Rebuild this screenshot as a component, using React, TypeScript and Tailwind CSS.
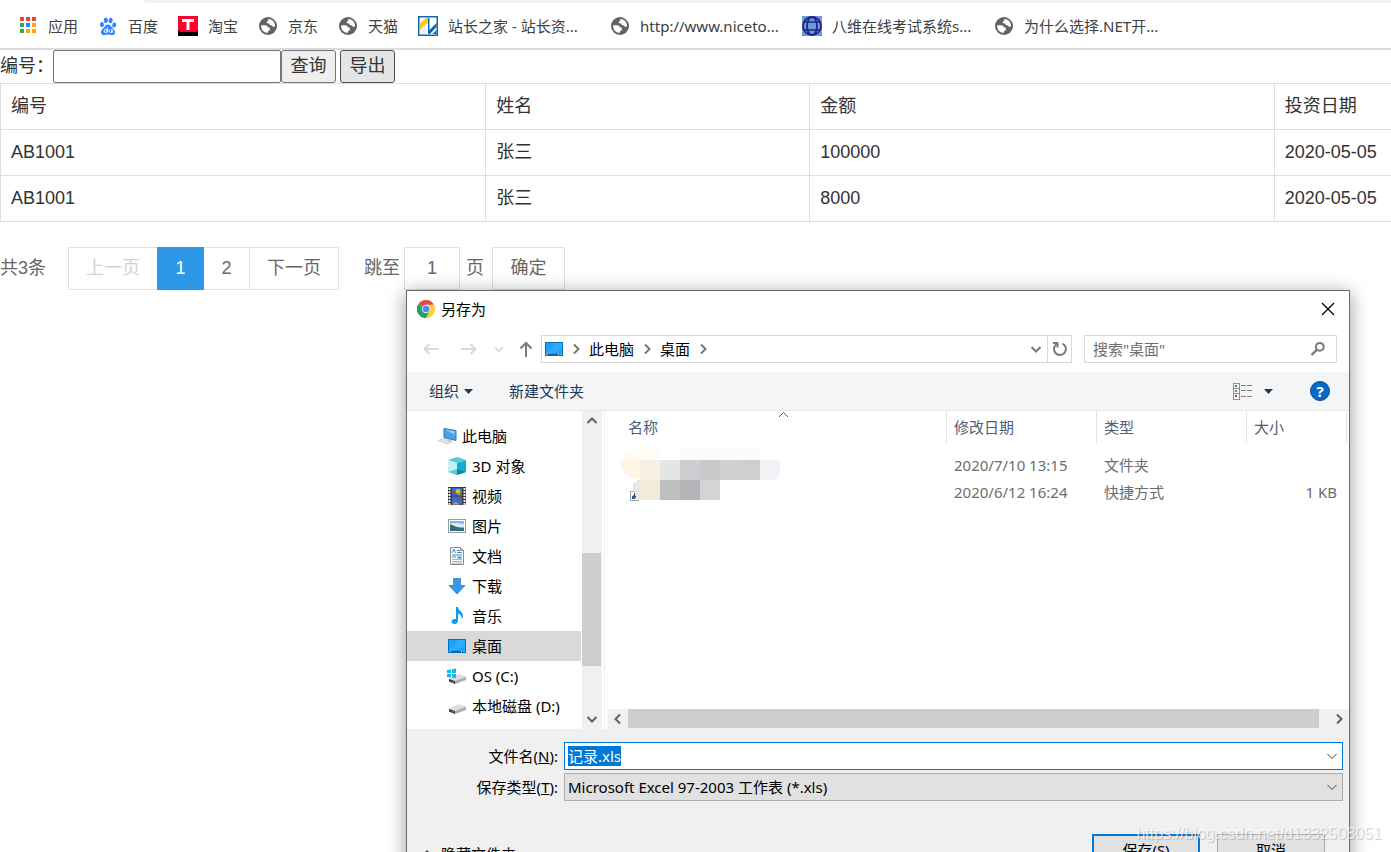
import React, { useEffect, useRef, useState } from 'react';

const UI_FONT = "font-['Noto_Sans','Noto_Sans_CJK_SC',sans-serif]";
const PAGE_FONT = "font-['Liberation_Sans','Noto_Sans_CJK_SC',sans-serif]";

/* ---------- bookmark icons ---------- */

const AppsIcon = () => (
  <svg width="20" height="20" viewBox="0 0 20 20" shapeRendering="crispEdges">
    <rect x="2" y="1" width="4" height="4" fill="#ea4335" />
    <rect x="8" y="1" width="4" height="4" fill="#ea4335" />
    <rect x="14" y="1" width="4" height="4" fill="#ea4335" />
    <rect x="2" y="7" width="4" height="4" fill="#34a853" />
    <rect x="8" y="7" width="4" height="4" fill="#1a8cff" />
    <rect x="14" y="7" width="4" height="4" fill="#fba90a" />
    <rect x="2" y="13" width="4" height="4" fill="#34a853" />
    <rect x="8" y="13" width="4" height="4" fill="#fba90a" />
    <rect x="14" y="13" width="4" height="4" fill="#fba90a" />
  </svg>
);

const PawIcon = () => (
  <svg width="20" height="20" viewBox="0 0 20 20" fill="#3385ff">
    <ellipse cx="4" cy="8.6" rx="2" ry="2.6" transform="rotate(-10 4 8.6)" />
    <ellipse cx="7.8" cy="4.3" rx="2" ry="2.8" />
    <ellipse cx="12.6" cy="4.5" rx="2" ry="2.8" transform="rotate(14 12.6 4.5)" />
    <ellipse cx="16.2" cy="9" rx="2" ry="2.6" transform="rotate(10 16.2 9)" />
    <path d="M10 8.6c2 0 2.8 1.7 4 3 1.400 1.400 3 2.500 3 4.600 0 2.200-1.700 3-3.500 2.800-1.300-.2-2.200-.4-3.500-.4s-2.200.3-3.500.5c-1.900.2-3.500-.8-3.500-2.900 0-2 1.600-3.200 3-4.600 1.200-1.300 2-3 4-3z" />
    <g fill="none" stroke="#fff" strokeWidth="1">
      <circle cx="7.600" cy="15" r="1.500" />
      <path d="M9.300 11.500v5M11.300 13.300v2c0 1.500 2.700 1.500 2.700 0v-2V17" />
    </g>
  </svg>
);

const TaobaoIcon = () => (
  <svg width="20" height="20" viewBox="0 0 20 20">
    <rect width="20" height="20" fill="#000" />
    <path d="M0 0h20v15l-2 1H2l-2-2z" fill="#ff0030" />
    <path d="M4 3h12v3h-4.500v8h-3V6H4z" fill="#fff" />
  </svg>
);

const GlobeIcon = () => (
  <svg width="20" height="20" viewBox="0 0 20 20">
    <circle cx="10" cy="10" r="9" fill="#5f6368" />
    <path d="M3.200 9.200h4.300c1.500 0 2.200.8 2.200 2.200 1.600-.2 2.300.6 2.200 1.900-.1 1.500-1.200 1.700-1.900 1.900v1.600C6 17 2.700 13.600 3.200 9.200z" fill="#fff" />
    <path d="M10.300 3.100c3.900-.1 6.900 3.200 6.600 7.200-.8 1.200-1.900.8-2.300 0-.3-.9-1-1.100-1.900-1.100-1.600 0-1.500-1.300-1.200-1.800-1.300.3-2.900.1-2.700-1.400.1-.9.7-1 1.500-1z" fill="#fff" />
  </svg>
);

const ChinazIcon = () => (
  <svg width="20" height="20" viewBox="0 0 20 20">
    <rect x=".75" y=".75" width="18.500" height="18.500" fill="#fff" stroke="#0c6ab5" strokeWidth="1.500" />
    <path d="M2 7.500 8 2h2v5l-3 2-5 5z" fill="#ffc80a" />
    <path d="M4 12v6h4V8z" fill="#e8eef4" />
    <path d="M10 2h1.500v12l7-7v4l-6.500 7h-2z" fill="#0c6ab5" />
    <path d="M14.500 18l4-4v4z" fill="#0c6ab5" />
  </svg>
);

const WireGlobeIcon = () => (
  <svg width="20" height="20" viewBox="0 0 20 20">
    <rect width="20" height="20" fill="#6a9bd1" />
    <g fill="none" stroke="#23238e" strokeWidth="1.800">
      <circle cx="10" cy="10" r="9" />
      <ellipse cx="10" cy="10" rx="5" ry="9" />
      <path d="M2 6h16M2 14h16" strokeWidth="1.500" />
    </g>
  </svg>
);

/* ---------- dialog icons ---------- */

const ChromeIcon = () => (
  <svg width="18" height="18" viewBox="0 0 18 18">
    <path d="M9 9 1.200 4.500A9 9 0 0 1 16.800 4.500z" fill="#dd5144" />
    <path d="M9 9 16.800 4.500A9 9 0 0 1 9 18z" fill="#ffce45" />
    <path d="M9 9v9A9 9 0 0 1 1.200 4.500z" fill="#1da362" />
    <path d="M9 4.800h7.900A9 9 0 0 1 9 18l3.600-7z" fill="#ffce45" />
    <path d="M5.400 11 1.200 4.500a9 9 0 0 0 7.700 13.500l3.700-6.800z" fill="#1da362" />
    <circle cx="9" cy="9" r="4.200" fill="#f1f1f1" />
    <circle cx="9" cy="9" r="3.300" fill="#4c8bf5" />
  </svg>
);

const DesktopIcon = () => (
  <svg width="18" height="14" viewBox="0 0 18 14">
    <rect x=".5" y=".5" width="17" height="13" fill="#1ba1ff" stroke="#0573b8" />
    <path d="M10 1h7v6L6 12H1z" fill="#3cb0ff" opacity=".6" />
    <path d="M1 12.500h16" stroke="#0a5a92" />
    <path d="M1.500 12.500h1M13 12.500h1M15.500 12.500h1" stroke="#fff" />
  </svg>
);

const ComputerIcon = () => (
  <svg width="20" height="20" viewBox="0 0 20 20">
    <path d="M7 2.500 19 4.500v10L7 11.500z" fill="#3fa7f0" stroke="#4a6f8d" />
    <path d="M8 3.500 18 5v4z" fill="#7ecbff" />
    <path d="M11 13l4 1.500-3 2-2-1z" fill="#b8c2ca" />
    <path d="M1 14.500 6 12.500l9 3.500-5 2z" fill="#dfe5ea" stroke="#b3bcc4" strokeWidth=".6" />
  </svg>
);

const CubeIcon = () => (
  <svg width="20" height="20" viewBox="0 0 20 20">
    <path d="M1 4 10 1l9 3-9 3z" fill="#54c8dd" />
    <path d="M1 4l9 3v12l-9-3z" fill="#c5f0f4" />
    <path d="M19 4l-9 3v12l9-3z" fill="#0db1cc" />
    <path d="M1 16l9-3v6z" fill="#5cc8d8" />
    <path d="M10 13l9 3-9 3z" fill="#0b8aa6" />
  </svg>
);

const VideoIcon = () => (
  <svg width="20" height="20" viewBox="0 0 20 20">
    <rect x="1" y="1" width="18" height="18" fill="#3a3a3a" />
    <path d="M2.500 2v17M17.500 2v17" stroke="#e8e8e8" strokeWidth="2" strokeDasharray="2 1" />
    <rect x="5" y="2" width="10" height="7.500" fill="#2f6fd6" />
    <rect x="5" y="10.500" width="10" height="8" fill="#2f6fd6" />
    <circle cx="11" cy="5.500" r="2.500" fill="#f3b81d" />
    <circle cx="8" cy="7" r="1.500" fill="#d8352a" />
    <path d="M10.500 7.500h4v2h-4z" fill="#3ba648" />
    <circle cx="12" cy="12" r="1.500" fill="#d8352a" />
    <path d="M5 18.500l4-3 3 3z" fill="#f08a24" />
  </svg>
);

const PictureIcon = () => (
  <svg width="20" height="20" viewBox="0 0 20 20">
    <rect x="1.500" y="3.500" width="17" height="13" fill="#fff" stroke="#9a9a9a" />
    <rect x="3" y="5" width="14" height="10" fill="#7db9ec" />
    <path d="M3 8c3-1.500 6-1 14 0v3H3z" fill="#d6eafa" />
    <path d="M3 8.500c3 0 5 3 14 4V13H3z" fill="#3f6b4e" />
    <path d="M3 12.500h14V15H3z" fill="#2e6a9c" />
  </svg>
);

const DocumentIcon = () => (
  <svg width="20" height="20" viewBox="0 0 20 20">
    <path d="M3.500 1.500h10l3 3v14h-13z" fill="#fff" stroke="#8c8c8c" />
    <path d="M13.500 1.500v3h3" fill="none" stroke="#8c8c8c" />
    <path d="M5 7l2-4 1.500 4M10 4.500h3M10 6.500h5M5 9h10M5 11h4" stroke="#2c8fd1" strokeWidth="1" fill="none" />
    <path d="M10.500 10.500h4v2h-4z" fill="#3a94c8" />
    <path d="M5 13.500h10M5 15.500h10M5 17.200h10" stroke="#9a9a9a" strokeWidth=".8" />
  </svg>
);

const DownloadIcon = () => (
  <svg width="20" height="20" viewBox="0 0 20 20">
    <path d="M6.500 2.500h7v7h4.500L10 18 2 9.500h4.500z" fill="#3c96e6" stroke="#2b7fce" strokeWidth=".8" />
  </svg>
);

const MusicIcon = () => (
  <svg width="20" height="20" viewBox="0 0 20 20">
    <path d="M9 1h2c0 3.500 5 4.500 5 9 0 1.500-.5 2.500-1.200 3.200.5-3-1.300-5-3.800-5.700V15c0 1.800-1.600 3-3.600 3C5.600 18 4.500 17 4.500 15.600c0-1.700 1.700-3 4.500-2.600z" fill="#0a9bf5" />
  </svg>
);

const DriveShape = () => (
  <>
    <path d="M2 13l10-4.500 7 2.500v3l-11 4-6-2.500z" fill="#a9adb0" />
    <path d="M2 13l10-4.500 7 2.500-11 4z" fill="#dcdfe1" />
    <path d="M2 13l6 2v3l-6-2.500z" fill="#3c4043" />
    <path d="M5.500 15.500l1.500.5" stroke="#3fd03f" />
  </>
);

const DriveIcon = () => (
  <svg width="20" height="20" viewBox="0 0 20 20"><DriveShape /></svg>
);

const OsDriveIcon = () => (
  <svg width="20" height="20" viewBox="0 0 20 20">
    <DriveShape />
    <path d="M0 4l4-.6V7H0zM5 3.200 9 2.500V7H5zM0 8h4v3.500L0 11zM5 8h4v4.200l-4-.6z" fill="#18b4f0" />
  </svg>
);

interface ChevronProps {
  dir: 'up' | 'down' | 'left' | 'right';
  color?: string;
  width?: number;
  size?: number;
}

const chevronPaths = {
  up: 'M1.500 8 6 3.500 10.500 8',
  down: 'M1.500 4 6 8.500 10.500 4',
  left: 'M8 1.500 3.500 6 8 10.500',
  right: 'M4 1.500 8.500 6 4 10.500',
};

const Chevron: React.FC<ChevronProps> = ({ dir, color = '#606060', width = 2, size = 12 }) => (
  <svg width={size} height={size} viewBox="0 0 12 12" fill="none" stroke={color} strokeWidth={width}>
    <path d={chevronPaths[dir]} />
  </svg>
);

const Caret = () => (
  <svg width="9" height="5" viewBox="0 0 9 5"><path d="M0 0h9L4.500 5z" fill="#1e395b" /></svg>
);

/* ---------- data ---------- */

const bookmarks = [
  { label: '应用', icon: <AppsIcon /> },
  { label: '百度', icon: <PawIcon /> },
  { label: '淘宝', icon: <TaobaoIcon /> },
  { label: '京东', icon: <GlobeIcon /> },
  { label: '天猫', icon: <GlobeIcon /> },
  { label: '站长之家 - 站长资...', icon: <ChinazIcon />, long: true },
  { label: 'http://www.niceto...', icon: <GlobeIcon />, long: true },
  { label: '八维在线考试系统s...', icon: <WireGlobeIcon />, long: true },
  { label: '为什么选择.NET开...', icon: <GlobeIcon />, long: true },
];

const records = [
  { code: 'AB1001', name: '张三', amount: '100000', date: '2020-05-05' },
  { code: 'AB1001', name: '张三', amount: '8000', date: '2020-05-05' },
];

const places = [
  { label: '3D 对象', icon: <CubeIcon /> },
  { label: '视频', icon: <VideoIcon /> },
  { label: '图片', icon: <PictureIcon /> },
  { label: '文档', icon: <DocumentIcon /> },
  { label: '下载', icon: <DownloadIcon /> },
  { label: '音乐', icon: <MusicIcon /> },
  { label: '桌面', icon: <DesktopIcon />, active: true },
  { label: 'OS (C:)', icon: <OsDriveIcon /> },
  { label: '本地磁盘 (D:)', icon: <DriveIcon /> },
];

/* ---------- browser page ---------- */

const BookmarkBar = () => (
  <header className={`${UI_FONT} border-b-2 border-[#dadce0] text-[15px] text-[#3c4043]`}>
    <div className="ml-[143px] h-[3px] rounded-bl-lg bg-[#f1f3f4]" />
    <nav className="flex h-[45px] items-center gap-5 pl-[18px]">
      {bookmarks.map((b) => (
        <a key={b.label} href="#" className="flex shrink-0 items-center gap-[10px] whitespace-nowrap">
          {b.icon}
          <span className={b.long ? 'w-[142px]' : ''}>{b.label}</span>
        </a>
      ))}
    </nav>
  </header>
);

const SearchForm = () => (
  <form className="flex h-[33px] items-center" onSubmit={(e) => e.preventDefault()}>
    <label htmlFor="code" className="w-[53px] whitespace-nowrap pb-[2px]">编号：</label>
    <input id="code" type="text" className="h-[33px] w-[228px] rounded-xs border border-[#767676] bg-white px-1" />
    <button className="h-[33px] w-[55px] rounded-[3px] border border-[#767676] bg-[#efefef] pb-[2px]">查询</button>
    <button className="ml-1 h-[33px] w-[55px] rounded-[3px] border border-[#4f4f4f] bg-[#e5e5e5] pb-[2px]">导出</button>
  </form>
);

const cell = 'h-[46px] border border-[#ddd] px-[10px] pt-0 pb-[2px] text-left font-normal';

const RecordTable = () => (
  <table className="w-full table-fixed border-collapse whitespace-nowrap">
    <thead>
      <tr>
        <th className={`${cell} w-[34.9%]`}>编号</th>
        <th className={`${cell} w-[23.3%]`}>姓名</th>
        <th className={`${cell} w-[33.4%]`}>金额</th>
        <th className={`${cell} border-r-0`}>投资日期</th>
      </tr>
    </thead>
    <tbody>
      {records.map((r) => (
        <tr key={r.amount}>
          <td className={cell}>{r.code}</td>
          <td className={cell}>{r.name}</td>
          <td className={cell}>{r.amount}</td>
          <td className={`${cell} border-r-0`}>{r.date}</td>
        </tr>
      ))}
    </tbody>
  </table>
);

const pageButton = 'h-full border-[#e2e2e2] pb-[2px]';

const Pagination = () => {
  const [page, setPage] = useState('1');

  return (
    <div className="mt-[25px] flex h-[43px] items-center whitespace-nowrap text-[#666]">
      <span className="w-[68px] pb-[2px]">共3条</span>
      <button disabled className={`${pageButton} w-[90px] border text-[#d2d2d2]`}>上一页</button>
      <button className="-ml-px h-full w-[47px] bg-[#2d98e7] pb-[2px] text-white">1</button>
      <button className={`${pageButton} w-[46px] border-y border-r`}>2</button>
      <button className={`${pageButton} w-[89px] border-y border-r`}>下一页</button>
      <label htmlFor="page" className="ml-[25px] pb-[2px]">跳至</label>
      <input
        id="page"
        value={page}
        onChange={(e) => setPage(e.target.value)}
        className="ml-1 h-full w-14 border border-[#e2e2e2] text-center"
      />
      <span className="mx-[6px] w-5 pb-[2px]">页</span>
      <button className={`${pageButton} w-[73px] border`}>确定</button>
    </div>
  );
};

/* ---------- save dialog ---------- */

const AddressRow = () => (
  <div className="flex h-[45px] items-start pl-1 pr-3 pt-2">
    <button aria-label="后退" className="flex h-7 w-10 items-center justify-center">
      <svg width="16" height="12" viewBox="0 0 16 12" fill="none" stroke="#d9d9d9" strokeWidth="2"><path d="M16 6H1.500M6.500 1l-5 5 5 5" /></svg>
    </button>
    <button aria-label="前进" className="flex h-7 w-9 items-center justify-center">
      <svg width="16" height="12" viewBox="0 0 16 12" fill="none" stroke="#d9d9d9" strokeWidth="2"><path d="M0 6h14.500M9.500 1l5 5-5 5" /></svg>
    </button>
    <button aria-label="最近" className="flex h-7 w-6 items-center justify-center">
      <Chevron dir="down" color="#d9d9d9" size={10} />
    </button>
    <button aria-label="上移" className="flex h-7 w-[30px] items-center justify-center">
      <svg width="14" height="16" viewBox="0 0 14 16" fill="none" stroke="#7a7a7a" strokeWidth="2"><path d="M7 16V2M1.500 7.500 7 2l5.500 5.500" /></svg>
    </button>
    <div className="flex h-7 flex-1 items-center border border-[#d9d9d9] pl-[3px]">
      <DesktopIcon />
      <span className="flex w-[26px] justify-center"><Chevron dir="right" color="#777" /></span>
      <a href="#">此电脑</a>
      <span className="flex w-[26px] justify-center"><Chevron dir="right" color="#777" /></span>
      <a href="#">桌面</a>
      <span className="flex w-[26px] justify-center"><Chevron dir="right" color="#777" /></span>
      <button aria-label="历史" className="ml-auto flex h-full w-6 items-center justify-center border-r border-[#d9d9d9]">
        <Chevron dir="down" color="#7a7a7a" />
      </button>
      <button aria-label="刷新" className="flex h-full w-[23px] items-center justify-center">
        <svg width="16" height="16" viewBox="0 0 16 16" fill="none" stroke="#7a7a7a" strokeWidth="2">
          <path d="M10.500 2.600a6 6 0 1 1-5.500.2" />
          <path d="M1 2h4.500v4.500" />
        </svg>
      </button>
    </div>
    <div className="ml-3 flex h-7 w-[253px] items-center border border-[#d9d9d9] pr-[10px]">
      <input aria-label="搜索" placeholder={'搜索"桌面"'} className="h-full min-w-0 flex-1 pl-2 outline-none placeholder:text-[#6d6d6d]" />
      <svg width="16" height="16" viewBox="0 0 16 16" fill="none" stroke="#7a7a7a" strokeWidth="2">
        <circle cx="9.800" cy="5.800" r="3.900" />
        <path d="M7 8.600 1.500 14" strokeWidth="2.400" />
      </svg>
    </div>
  </div>
);

const CommandBar = () => (
  <div className="flex h-[39px] items-center border-b border-[#e5e7e9] bg-[#f4f5f7] pl-[22px] pr-[19px] text-[#1e395b]">
    <button className="flex items-center gap-[5px]">组织 <Caret /></button>
    <button className="ml-9">新建文件夹</button>
    <button aria-label="视图" className="ml-auto flex items-center gap-3">
      <svg width="19" height="17" viewBox="0 0 19 17" fill="none" shapeRendering="crispEdges">
        <path d="M.5.500h6v16h-6zM.5 5.500h6M.5 10.500h6" stroke="#909090" />
        <path d="M8 2.500h11M8 7.500h11M8 13.500h11" stroke="#808080" strokeDasharray="5 1" />
        <rect x="2" y="2" width="2" height="2" fill="#3b7dc4" />
        <rect x="2" y="7" width="2" height="2" fill="#8a8a3a" />
        <rect x="2" y="12" width="2" height="2" fill="#b83a2a" />
      </svg>
      <Caret />
    </button>
    <button aria-label="帮助" className="ml-[37px] flex h-5 w-5 items-center justify-center rounded-full border border-[#124a82] bg-[#0668c8] font-bold text-white">?</button>
  </div>
);

const PlaceTree = () => (
  <div className="flex w-[198px] border-r border-[#f0f0f0] text-black">
    <ul className="mr-px w-[174px] shrink-0 pt-[10px]">
      <li><a href="#" className="flex h-[30px] items-center gap-[5px] pl-[30px]"><ComputerIcon />此电脑</a></li>
      {places.map((p) => (
        <li key={p.label}>
          <a href="#" className={`flex h-[30px] items-center gap-[5px] whitespace-nowrap pl-10 ${p.active ? 'bg-[#d9d9d9]' : ''}`}>
            <span className="flex w-5 justify-center">{p.icon}</span>
            {p.label}
          </a>
        </li>
      ))}
    </ul>
    <div className="mr-[2px] flex w-5 flex-col bg-[#f0f0f0]">
      <button aria-label="向上滚动" className="flex h-5 items-center justify-center"><Chevron dir="up" /></button>
      <div className="mb-[43px] mr-px mt-auto h-[113px] bg-[#cdcdcd]" />
      <button aria-label="向下滚动" className="flex h-5 items-center justify-center"><Chevron dir="down" /></button>
    </div>
  </div>
);

const FolderMosaic = () => (
  <svg width="160" height="27" viewBox="0 0 160 27" className="overflow-visible" shapeRendering="crispEdges">
    <path d="M0 7C1 0 10-5 20-5h20V7z" fill="#fefcf6" />
    <path d="M60-4h80V7H60z" fill="#fbfbfb" />
    <path d="M0 7h20v20C8 26 0 18 0 7z" fill="#fdf6e3" />
    <rect x="20" y="7" width="20" height="20" fill="#f8f0e4" />
    <rect x="40" y="7" width="20" height="20" fill="#e4e6e5" />
    <rect x="60" y="7" width="20" height="20" fill="#cdced1" />
    <rect x="80" y="7" width="20" height="20" fill="#c8cac9" />
    <rect x="100" y="7" width="20" height="20" fill="#cfd0d1" />
    <rect x="120" y="7" width="20" height="20" fill="#d1cfcd" />
    <path d="M140 7h20v14l-6 6h-14z" fill="#f1f2f5" />
  </svg>
);

const ShortcutMosaic = () => (
  <svg width="160" height="27" viewBox="0 0 160 27" className="overflow-visible" shapeRendering="crispEdges">
    <rect x="13" y="3" width="3" height="8" fill="#ffe08a" />
    <rect x="10.500" y="11.500" width="8" height="9" fill="#fff" stroke="#a0a0a0" />
    <path d="M12 19v-3l2-1v-2l4 4-3 1v1z" fill="#2b5797" />
    <path d="M17 0h3v20h-3l-3-8V5z" fill="#ebe9df" />
    <rect x="20" width="20" height="20" fill="#f2ebd9" />
    <rect x="40" width="20" height="20" fill="#c0bfbf" />
    <rect x="60" width="20" height="20" fill="#b4b5b8" />
    <rect x="80" width="20" height="20" fill="#d3d5d5" />
  </svg>
);

const headCell = 'flex h-8 items-center border-r border-[#e5e5e5]';
const fileCell = 'pt-0 pb-1 pl-[7px]';

const FileList = () => (
  <div className="flex min-w-0 flex-1 flex-col">
    <table className="w-full table-fixed whitespace-nowrap text-left text-[#6d6d6d]">
      <thead className="text-[#4c607a]">
        <tr>
          <th className="w-[342px] p-0 pb-[10px] font-normal">
            <div className={`${headCell} relative pl-[23px]`}>
              名称
              <span className="absolute left-[173px] top-0">
                <svg width="11" height="7" viewBox="0 0 11 7" fill="none" stroke="#606060"><path d="M1 6l4.500-4.500L10 6" /></svg>
              </span>
            </div>
          </th>
          <th className="w-[150px] p-0 pb-[10px] font-normal"><div className={`${headCell} pl-[7px]`}>修改日期</div></th>
          <th className="w-[150px] p-0 pb-[10px] font-normal"><div className={`${headCell} pl-[7px]`}>类型</div></th>
          <th className="w-[100px] p-0 pb-[10px] font-normal"><div className={`${headCell} pl-[7px]`}>大小</div></th>
          <th className="p-0" />
        </tr>
      </thead>
      <tbody>
        <tr className="h-[27px]">
          <td className="p-0 pl-[15px]"><FolderMosaic /></td>
          <td className={fileCell}>2020/7/10 13:15</td>
          <td className={fileCell}>文件夹</td>
          <td />
          <td />
        </tr>
        <tr className="h-[27px]">
          <td className="p-0 pl-[15px]"><ShortcutMosaic /></td>
          <td className={fileCell}>2020/6/12 16:24</td>
          <td className={fileCell}>快捷方式</td>
          <td className="pb-1 pr-[10px] pt-0 text-right">1 KB</td>
          <td />
        </tr>
      </tbody>
    </table>
    <div className="ml-[3px] mt-auto flex h-5 bg-[#f0f0f0]">
      <button aria-label="向左滚动" className="flex w-5 items-center justify-center"><Chevron dir="left" /></button>
      <div className="mb-px flex-1 bg-[#cdcdcd]" />
      <button aria-label="向右滚动" className="ml-[10px] flex w-5 items-center justify-center"><Chevron dir="right" /></button>
    </div>
  </div>
);

const SaveDialog = () => {
  const [fileName, setFileName] = useState('记录.xls');
  const nameRef = useRef<HTMLInputElement>(null);

  useEffect(() => {
    nameRef.current?.focus({ preventScroll: true });
    nameRef.current?.select();
  }, []);

  return (
    <section
      role="dialog"
      aria-label="另存为"
      className={`${UI_FONT} absolute left-[406px] top-[290px] w-[944px] border border-[#6b6b6b] bg-white text-[15px] leading-5 text-black shadow-[0_3px_18px_rgba(0,0,0,0.4)]`}
    >
      <div className="flex h-9 items-center gap-[6px] pl-[10px] pr-[14px]">
        <ChromeIcon />
        <h1>另存为</h1>
        <button aria-label="关闭" className="ml-auto">
          <svg width="14" height="14" viewBox="0 0 14 14" stroke="#000" strokeWidth="1.200"><path d="M1 1l12 12M13 1 1 13" /></svg>
        </button>
      </div>
      <AddressRow />
      <CommandBar />
      <div className="flex h-[318px]">
        <PlaceTree />
        <FileList />
      </div>
      <div className="bg-[#f0f0f0] pb-6 pl-2 pr-[6px] pt-[13px]">
        <div className="flex items-center">
          <label htmlFor="file-name" className="w-[149px] pr-[6px] text-right">文件名(<u>N</u>):</label>
          <div className="flex h-7 flex-1 items-center border border-[#0078d7] bg-white pl-[3px] pr-1">
            <input
              id="file-name"
              ref={nameRef}
              value={fileName}
              onChange={(e) => setFileName(e.target.value)}
              className="min-w-0 flex-1 outline-none selection:bg-[#0078d7] selection:text-white"
            />
            <Chevron dir="down" width={1} color="#404040" />
          </div>
        </div>
        <div className="mt-[3px] flex items-center">
          <label htmlFor="file-type" className="w-[149px] pr-[6px] text-right">保存类型(<u>T</u>):</label>
          <div className="grid h-7 flex-1 items-center border border-[#adadad] bg-[#e1e1e1]">
            <select id="file-type" className="col-start-1 row-start-1 h-full w-full appearance-none pl-[3px] outline-none">
              <option>Microsoft Excel 97-2003 工作表 (*.xls)</option>
            </select>
            <span className="pointer-events-none col-start-1 row-start-1 justify-self-end pr-1">
              <Chevron dir="down" width={1} color="#404040" />
            </span>
          </div>
        </div>
        <div className="mt-[33px] flex items-center pr-[18px]">
          <button className="ml-[6px] mt-2 flex items-center gap-2">
            <Chevron dir="up" color="#404040" />
            隐藏文件夹
          </button>
          <button className="ml-auto h-8 w-[108px] border-2 border-[#0078d7] bg-[#e1e1e1]">保存(S)</button>
          <button className="ml-[17px] h-8 w-[108px] border border-[#adadad] bg-[#e1e1e1]">取消</button>
        </div>
      </div>
    </section>
  );
};

export default function App() {
  return (
    <div className={`${PAGE_FONT} relative h-screen overflow-hidden bg-white text-[18px] leading-6 text-[#333]`}>
      <BookmarkBar />
      <main>
        <SearchForm />
        <RecordTable />
        <Pagination />
      </main>
      <SaveDialog />
      <p className="absolute bottom-[6px] right-[9px] text-[16px] text-white/70 [text-shadow:1px_1px_1px_rgba(0,0,0,0.2)]">
        https://blog.csdn.net/d1332508051
      </p>
    </div>
  );
}
